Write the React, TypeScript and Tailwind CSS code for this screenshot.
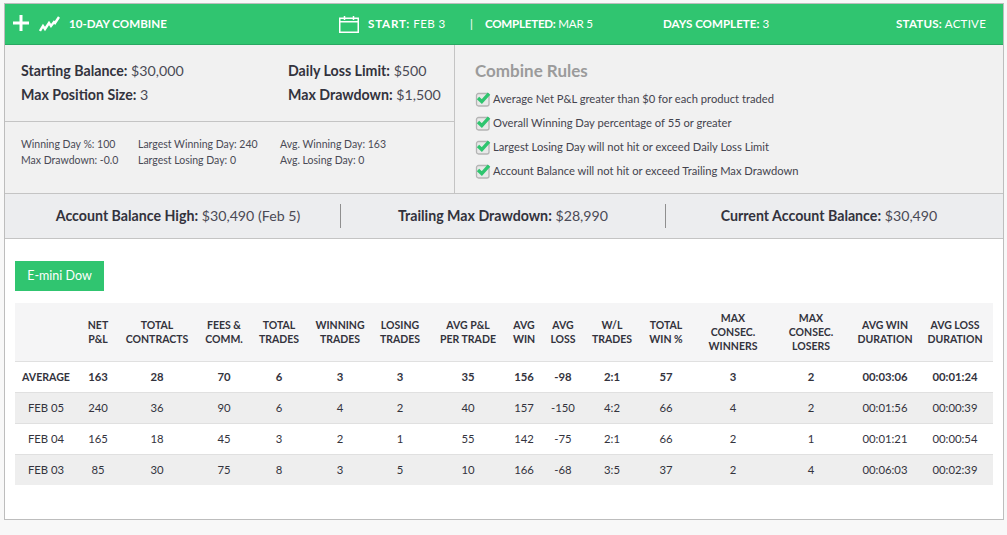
const rules = [
  'Average Net P&L greater than $0 for each product traded',
  'Overall Winning Day percentage of 55 or greater',
  'Largest Losing Day will not hit or exceed Daily Loss Limit',
  'Account Balance will not hit or exceed Trailing Max Drawdown',
];

const columns: [string[], string][] = [
  [[''], 'w-[62px]'],
  [['NET', 'P&L'], 'w-[42px]'],
  [['TOTAL', 'CONTRACTS'], 'w-[76px]'],
  [['FEES &', 'COMM.'], 'w-[58px]'],
  [['TOTAL', 'TRADES'], 'w-[52px]'],
  [['WINNING', 'TRADES'], 'w-[70px]'],
  [['LOSING', 'TRADES'], 'w-[50px]'],
  [['AVG P&L', 'PER TRADE'], 'w-[86px]'],
  [['AVG', 'WIN'], 'w-[26px]'],
  [['AVG', 'LOSS'], 'w-[52px]'],
  [['W/L', 'TRADES'], 'w-[46px]'],
  [['TOTAL', 'WIN %'], 'w-[62px]'],
  [['MAX', 'CONSEC.', 'WINNERS'], 'w-[72px]'],
  [['MAX', 'CONSEC.', 'LOSERS'], 'w-[84px]'],
  [['AVG WIN', 'DURATION'], 'w-[64px]'],
  [['AVG LOSS', 'DURATION'], 'w-[76px]'],
];

const rows = [
  ['AVERAGE', '163', '28', '70', '6', '3', '3', '35', '156', '-98', '2:1', '57', '3', '2', '00:03:06', '00:01:24'],
  ['FEB 05', '240', '36', '90', '6', '4', '2', '40', '157', '-150', '4:2', '66', '4', '2', '00:01:56', '00:00:39'],
  ['FEB 04', '165', '18', '45', '3', '2', '1', '55', '142', '-75', '2:1', '66', '2', '1', '00:01:21', '00:00:54'],
  ['FEB 03', '85', '30', '75', '8', '3', '5', '10', '166', '-68', '3:5', '37', '2', '4', '00:06:03', '00:02:39'],
];

function CheckBox() {
  return (
    <svg width="16" height="16" viewBox="0 0 16 16" className="shrink-0">
      <rect x="1.5" y="2.5" width="12.5" height="12.5" rx="2" fill="#e8e8e8" stroke="#b4b4b4" strokeWidth="1.3" />
      <path d="M3 7 L6.8 10.6 L14 2.6" fill="none" stroke="#2fc56f" strokeWidth="3.4" />
    </svg>
  );
}

function Label({ name, value }: { name: string; value: string }) {
  return (
    <div>
      <span className="font-bold">{name}:</span> <span className="text-[#4a4a55]">{value}</span>
    </div>
  );
}

export default function App() {
  return (
    <div className="h-[535px] w-[1007px] overflow-hidden bg-[#f8f8f8] pt-[3px] pl-[4px] font-['Lato','Liberation_Sans',sans-serif] text-[#33333d]">
      <div className="h-[517px] w-[1000px] border border-[#bdbdbd] bg-white">
        {/* Top bar */}
        <div className="flex h-[41px] items-center border-b border-[#29a862] bg-[#30c570] pl-[8px] text-[11.6px] text-white">
          <svg width="16" height="16" viewBox="0 0 16 16" className="mr-[10px] -translate-y-px">
            <path d="M8 0 V16 M0 8 H16" stroke="white" strokeWidth="3" />
          </svg>
          <svg width="21" height="16" viewBox="0 0 21 16" className="mr-[9px]">
            <path d="M1 15 L4 10 L6 13 L10 7 L12 10 L15 6 L16 7 L20 1" fill="none" stroke="white" strokeWidth="2.4" />
          </svg>
          <span className="w-[270px] font-bold">10-DAY COMBINE</span>
          <svg width="20" height="18" viewBox="0 0 20 18" className="mr-[9px]">
            <path d="M.75 3.25 H19.25 V17.25 H.75 Z M.75 6.75 H19.25" fill="none" stroke="white" strokeWidth="1.5" />
            <path d="M5.5 1 V5 M14.5 1 V5" stroke="white" strokeWidth="1.5" />
          </svg>
          <span className="w-[102px] tracking-[0.4px]"><b className="tracking-[0.8px]">START:</b> FEB 3</span>
          <span className="w-[15px]">|</span>
          <span className="w-[178px] tracking-[-0.25px]"><b>COMPLETED:</b> MAR 5</span>
          <span className="w-[233px]"><b>DAYS COMPLETE:</b> 3</span>
          <span className="tracking-[0.2px]"><b>STATUS:</b> ACTIVE</span>
        </div>

        {/* Info panels */}
        <div className="flex h-[149px] border-b border-[#c4c4c4] bg-[#f1f1f1]">
          <div className="w-[450px] border-r border-[#c4c4c4]">
            <div className="grid h-[77px] grid-cols-[267px_1fr] content-start gap-y-[5px] border-b border-[#c4c4c4] pt-[16px] pl-[16px] text-[14.2px] leading-[19px]">
              <Label name="Starting Balance" value="$30,000" />
              <Label name="Daily Loss Limit" value="$500" />
              <Label name="Max Position Size" value="3" />
              <Label name="Max Drawdown" value="$1,500" />
            </div>
            <div className="grid grid-cols-[117px_142px_1fr] gap-y-[2px] pt-[15px] pl-[16px] text-[10.5px] leading-[14px] text-[#4a4a55]">
              <div>Winning Day %: 100</div>
              <div>Largest Winning Day: 240</div>
              <div>Avg. Winning Day: 163</div>
              <div>Max Drawdown: -0.0</div>
              <div>Largest Losing Day: 0</div>
              <div>Avg. Losing Day: 0</div>
            </div>
          </div>
          <div className="pt-[14px] pl-[20px]">
            <div className="mb-[8px] text-[17px] leading-[24px] font-bold text-[#9b9b9b]">Combine Rules</div>
            <div className="flex flex-col gap-[8px]">
              {rules.map((rule) => (
                <div key={rule} className="flex h-[16px] items-center gap-[2px] text-[11.2px] text-[#44444e]">
                  <CheckBox />
                  {rule}
                </div>
              ))}
            </div>
          </div>
        </div>

        {/* Account summary */}
        <div className="flex h-[45px] items-center border-b border-[#c4c4c4] bg-[#ecedef] text-[14.2px]">
          <div className="w-[335px] pl-[11px] text-center"><Label name="Account Balance High" value="$30,490 (Feb 5)" /></div>
          <div className="h-[24px] w-px bg-[#8f8f8f]" />
          <div className="w-[324px] text-center"><Label name="Trailing Max Drawdown" value="$28,990" /></div>
          <div className="h-[24px] w-px bg-[#8f8f8f]" />
          <div className="w-[326px] text-center"><Label name="Current Account Balance" value="$30,490" /></div>
        </div>

        {/* Product table */}
        <div className="px-[10px] pt-[22px]">
          <button className="mb-[12px] block h-[30px] w-[89px] bg-[#30c570] text-[12.5px] text-white">E-mini Dow</button>
          <table className="w-[978px] table-fixed border-collapse text-center text-[11.3px]">
            <colgroup>
              {columns.map(([, width], i) => <col key={i} className={width} />)}
            </colgroup>
            <thead>
              <tr className="h-[58px] border-b border-[#e0e0e0] bg-[#f5f5f6] text-[10.5px] leading-[14px] font-bold">
                {columns.map(([lines], i) => (
                  <th key={i} className="p-0 font-bold whitespace-nowrap">
                    {lines.map((line) => <div key={line}>{line}</div>)}
                  </th>
                ))}
              </tr>
            </thead>
            <tbody>
              {rows.map((row, r) => (
                <tr key={row[0]} className={`h-[31px] border-b border-[#e0e0e0] last:border-b-0 ${r % 2 === 1 ? 'bg-[#eeeeee]' : 'bg-white'} ${r === 0 ? 'font-bold' : ''}`}>
                  {row.map((cell, c) => (
                    <td key={c} className={`p-0 pt-[2px] whitespace-nowrap ${r === 0 && c === 0 ? 'text-[10.6px]' : ''}`}>{cell}</td>
                  ))}
                </tr>
              ))}
            </tbody>
          </table>
        </div>
      </div>
    </div>
  );
}
